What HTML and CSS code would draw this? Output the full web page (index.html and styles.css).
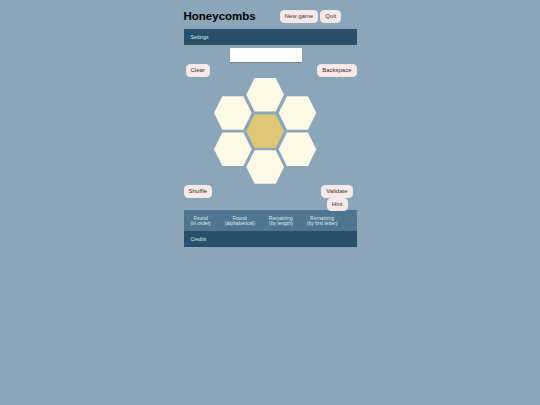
FILE: index.html
```html
<!DOCTYPE html>
<html>
	<head>
		<meta charset="utf-8">
		<title>Honeycombs</title>
		<link rel="stylesheet" href="styles.css">
	</head>
	<body>
		<div id="page">
			<div class="header">
				<h1 class="title">Honeycombs</h1>
				<div class="header-buttons">
					<button class="btn">New game</button>
					<button class="btn">Quit</button>
				</div>
			</div>
			<div class="bar bar-settings">Settings</div>
			<div class="word-row"><input class="word" type="text"></div>
			<div class="edit-row">
				<button class="btn">Clear</button>
				<button class="btn">Backspace</button>
			</div>
			<svg class="comb" viewBox="0 0 102 106" width="102" height="106">
				<polygon class="cell" points="32.3,16.7 40.6,0 61.7,0 70,16.7 61.7,33.4 40.6,33.4"/>
				<polygon class="cell" points="0,35 8.3,18.3 29.4,18.3 37.7,35 29.4,51.7 8.3,51.7"/>
				<polygon class="cell" points="64.6,35 72.9,18.3 94,18.3 102.3,35 94,51.7 72.9,51.7"/>
				<polygon class="cell center" points="32.3,53.2 40.6,36.5 61.7,36.5 70,53.2 61.7,69.9 40.6,69.9"/>
				<polygon class="cell" points="0,71.3 8.3,54.6 29.4,54.6 37.7,71.3 29.4,88 8.3,88"/>
				<polygon class="cell" points="64.6,71.3 72.9,54.6 94,54.6 102.3,71.3 94,88 72.9,88"/>
				<polygon class="cell" points="32.3,89 40.6,72.3 61.7,72.3 70,89 61.7,105.7 40.6,105.7"/>
			</svg>
			<div class="play-row">
				<button class="btn">Shuffle</button>
				<div class="play-right">
					<button class="btn validate">Validate</button>
					<button class="btn hint">Hint</button>
				</div>
			</div>
			<div class="tabs">
				<div class="tab">Found<br>(in order)</div>
				<div class="tab">Found<br>(alphabetical)</div>
				<div class="tab">Remaining<br>(by length)</div>
				<div class="tab">Remaining<br>(by first letter)</div>
			</div>
			<div class="bar bar-credits">Credits</div>
		</div>
	</body>
</html>
```
FILE: styles.css
```css
html, body {
	height: 100%;
}

body {
	margin: 0;
	background: #8ba6b8;
	font-family: "Liberation Sans", Arial, sans-serif;
}

#page {
	width: 173px;
	margin: 0 auto;
}

.header {
	display: flex;
	align-items: center;
	height: 29px;
	padding-top: 3px;
	box-sizing: border-box;
}

.title {
	margin: 0;
	width: 96px;
	font-family: "Liberation Sans", Arial, sans-serif;
	font-size: 11.5px;
	font-weight: bold;
	color: #000;
}

.header-buttons {
	display: flex;
	gap: 2px;
}

.btn {
	height: 13px;
	padding: 0 4px;
	border: 1px solid #e8eaec;
	border-radius: 4px;
	background: #fce8e6;
	color: #333;
	font-family: "Liberation Sans", Arial, sans-serif;
	font-size: 6px;
	line-height: 11px;
	white-space: nowrap;
	box-sizing: border-box;
}

.bar {
	display: flex;
	align-items: center;
	height: 16px;
	padding-left: 7px;
	background: #29506b;
	color: #dfe8ee;
	font-size: 5px;
}

.word-row {
	display: flex;
	justify-content: center;
	padding: 3px 9px 0 0;
}

.word {
	display: block;
	width: 72px;
	height: 14px;
	padding: 0;
	border: 0;
	background: #fff;
	box-sizing: border-box;
	box-shadow: 0 1px 1px #6f8a9c;
}

.edit-row {
	display: flex;
	justify-content: space-between;
	padding: 2px 0 0 2px;
}

.comb {
	display: block;
	margin: 1px 0 0 30px;
	overflow: visible;
}

.cell {
	fill: #fff9e8;
}

.center {
	fill: #dfc777;
}

.play-row {
	display: flex;
	justify-content: space-between;
	align-items: flex-start;
	margin-top: 1px;
}

.play-right {
	display: flex;
	flex-direction: column;
	align-items: flex-end;
}

.validate {
	margin-right: 4px;
}

.hint {
	margin-right: 9px;
}

.tabs {
	display: flex;
	height: 21px;
	margin-top: -1px;
	align-items: center;
	background: #4f7690;
	color: #dfe8ee;
	font-size: 5px;
	line-height: 5px;
	text-align: center;
}

.tab {
	padding: 0 7px;
	white-space: nowrap;
}
```
